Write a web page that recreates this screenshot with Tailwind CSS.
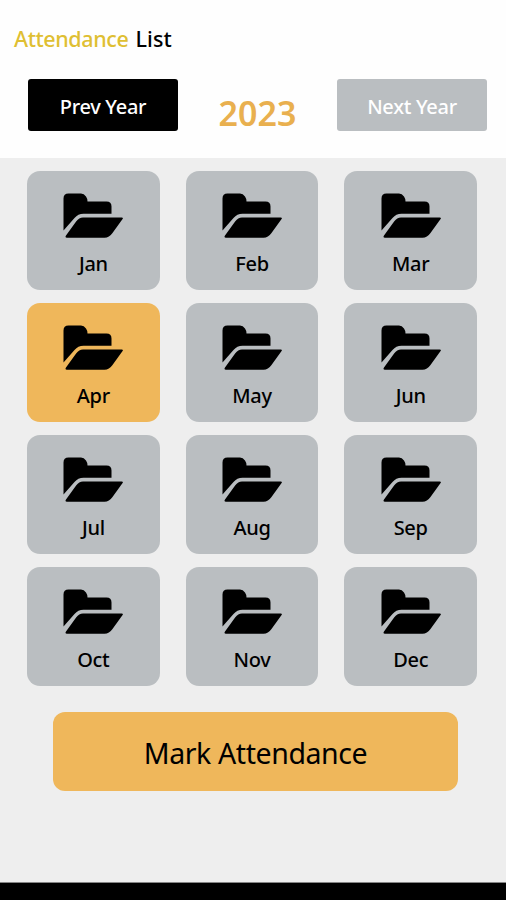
<!DOCTYPE html>
<html lang="en">
<head>
    <meta charset="UTF-8">
    <meta name="viewport" content="width=device-width, initial-scale=1.0">
    <title>Attendance List</title>
    <script src="https://cdn.jsdelivr.net/npm/@tailwindcss/browser@4"></script>
</head>
<body class="bg-[#eeeeee] text-black font-['Noto_Sans',sans-serif]">
    <div class="flex flex-col h-[900px] overflow-hidden">
        <!-- Header -->
        <header class="h-[158px] bg-[#fefefe] shrink-0">
            <h1 class="pt-[25px] pl-[14px] text-[21.5px] leading-[28px] font-medium tracking-[-0.4px]"><span class="text-[#dfbf32]">Attendance</span><span class="ml-[7px] tracking-[0.1px]">List</span></h1>
            <div class="flex justify-between pt-[26px] pl-[28px] pr-[19px]">
                <button class="w-[150px] h-[52px] pt-[3px] bg-black text-white rounded-[3px] text-[20px] font-medium tracking-[-0.3px]">Prev Year</button>
                <span class="pt-[14px] text-[34px] leading-[40px] font-semibold text-[#e9b04f]">2023</span>
                <button class="w-[150px] h-[52px] pt-[3px] bg-[#babec1] text-white rounded-[3px] text-[20px] font-medium tracking-[-0.3px]">Next Year</button>
            </div>
        </header>

        <!-- Month Grid -->
        <main class="grow">
            <div id="monthGrid" class="grid grid-cols-3 gap-x-[26px] gap-y-[13px] pt-[13px] pl-[27px] pr-[29px]"></div>
            <button class="block w-[405px] h-[79px] mt-[26px] ml-[53px] pt-[3px] bg-[#efb75b] rounded-[12px] text-[28.5px] tracking-[-0.4px]">Mark Attendance</button>
        </main>

        <!-- Bottom Bar -->
        <footer class="h-[18px] bg-black border-t border-[#858585] shrink-0"></footer>
    </div>

    <template id="monthCard">
        <button class="flex flex-col items-center h-[119px] pt-[22px] rounded-[13px]">
            <svg class="w-[60px] h-[45px]" viewBox="0 0 60 45" fill="currentColor">
                <path d="M.5 37.5V5.5Q.5.5 5.5.5H18Q21 .5 23 3.5Q24.5 5.5 24.5 8.5H43.5Q48.5 8.5 48.5 13.5V20.7H20.5Q15 20.7 11.5 25Z"/>
                <path d="M20 24.5H58.7Q60.7 24.5 59.4 26.3L49.5 40Q46.2 44.7 41.5 44.7H4Q1.6 44.7 3 42.6L13.3 28.3Q16 24.5 20 24.5Z"/>
            </svg>
            <span class="mt-[12px] text-[20px] leading-[27px] font-medium tracking-[-0.3px]"></span>
        </button>
    </template>

    <script>
        const months = ['Jan', 'Feb', 'Mar', 'Apr', 'May', 'Jun', 'Jul', 'Aug', 'Sep', 'Oct', 'Nov', 'Dec'];
        const current = 'Apr';
        const grid = document.getElementById('monthGrid');
        const template = document.getElementById('monthCard');

        months.forEach(month => {
            const card = template.content.firstElementChild.cloneNode(true);
            card.classList.add(month === current ? 'bg-[#efb75b]' : 'bg-[#babec1]');
            card.querySelector('span').textContent = month;
            grid.appendChild(card);
        });
    </script>
</body>
</html>
